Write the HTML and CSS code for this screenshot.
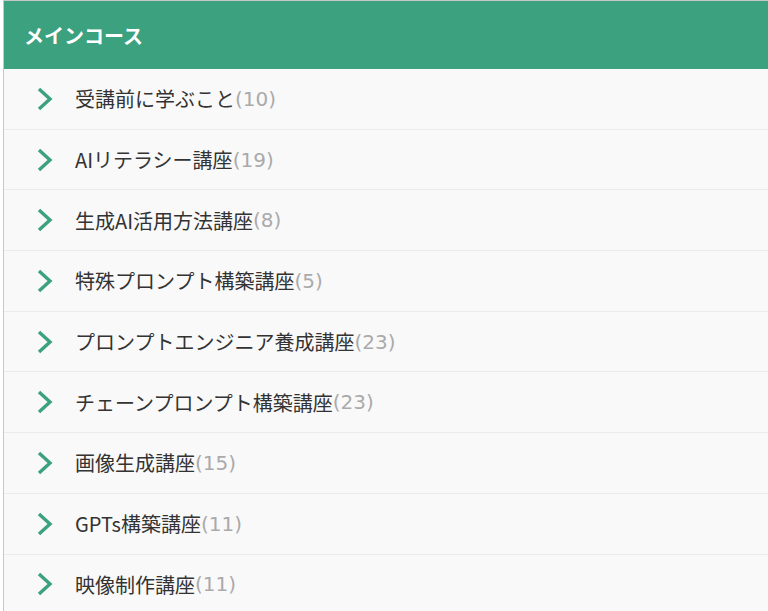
FILE: index.html
```html
<!DOCTYPE html>
<html lang="ja">
<head>
    <meta charset="UTF-8">
    <meta name="viewport" content="width=device-width, initial-scale=1.0">
    <title>メインコース</title>
    <link rel="stylesheet" href="styles.css">
</head>
<body>
    <div class="course-box">
        <h2 class="course-title">メインコース</h2>
        <ul class="course-list">
            <li><svg class="arrow" viewBox="0 0 18 24"><polyline points="3,2 14,12 3,22"/></svg><span class="name">受講前に学ぶこと</span><span class="count">(10)</span></li>
            <li><svg class="arrow" viewBox="0 0 18 24"><polyline points="3,2 14,12 3,22"/></svg><span class="name">AIリテラシー講座</span><span class="count">(19)</span></li>
            <li><svg class="arrow" viewBox="0 0 18 24"><polyline points="3,2 14,12 3,22"/></svg><span class="name">生成AI活用方法講座</span><span class="count">(8)</span></li>
            <li><svg class="arrow" viewBox="0 0 18 24"><polyline points="3,2 14,12 3,22"/></svg><span class="name">特殊プロンプト構築講座</span><span class="count">(5)</span></li>
            <li><svg class="arrow" viewBox="0 0 18 24"><polyline points="3,2 14,12 3,22"/></svg><span class="name">プロンプトエンジニア養成講座</span><span class="count">(23)</span></li>
            <li><svg class="arrow" viewBox="0 0 18 24"><polyline points="3,2 14,12 3,22"/></svg><span class="name">チェーンプロンプト構築講座</span><span class="count">(23)</span></li>
            <li><svg class="arrow" viewBox="0 0 18 24"><polyline points="3,2 14,12 3,22"/></svg><span class="name">画像生成講座</span><span class="count">(15)</span></li>
            <li><svg class="arrow" viewBox="0 0 18 24"><polyline points="3,2 14,12 3,22"/></svg><span class="name">GPTs構築講座</span><span class="count">(11)</span></li>
            <li><svg class="arrow" viewBox="0 0 18 24"><polyline points="3,2 14,12 3,22"/></svg><span class="name">映像制作講座</span><span class="count">(11)</span></li>
        </ul>
    </div>
</body>
</html>
```

FILE: styles.css
```css
body {
    font-family: "Noto Sans CJK JP", "Noto Sans", sans-serif;
    margin: 0;
    padding: 0;
    background: #fff;
    color: #333;
}
.course-box {
    margin-left: 3px;
    border-top: 1px solid #c8c8c8;
    border-left: 1px solid #c8c8c8;
    background: #f9f9f9;
}
.course-title {
    margin: 0;
    height: 68px;
    padding: 0 20px;
    display: flex;
    align-items: center;
    background: #3ba17e;
    color: #fff;
    font-size: 20px;
    font-weight: bold;
}
.course-list {
    list-style: none;
    margin: 0;
    padding: 0;
}
.course-list li {
    box-sizing: border-box;
    height: 60.7px;
    display: flex;
    align-items: center;
    padding-left: 32px;
    border-bottom: 1px solid #ebebeb;
    font-size: 20px;
}
.arrow {
    width: 18px;
    height: 24px;
    margin-right: 21px;
    fill: none;
    stroke: #3ba17e;
    stroke-width: 3.4;
    stroke-linejoin: miter;
}
.name {
    color: #333;
}
.count {
    font-family: "DejaVu Sans", sans-serif;
    color: #aaa;
}
```
